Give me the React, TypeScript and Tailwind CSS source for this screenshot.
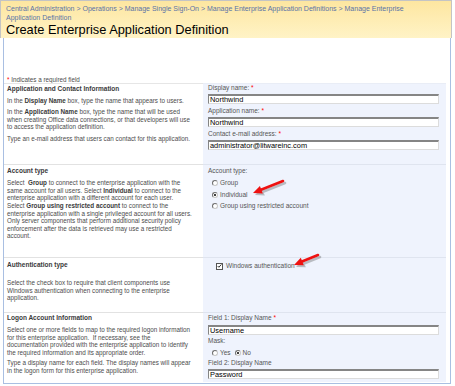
import React from "react";

const font = "font-['Liberation_Sans',Arial,sans-serif]";

function Req() {
  return <span className="text-[#ff0000]"> *</span>;
}

function Input({ value }: { value: string }) {
  return (
    <div
      className="
        h-[10px]
        w-[231px]
        border-t-2
        border-l
        border-r
        border-b
        border-t-[#858585]
        border-l-[#858585]
        border-r-[#dcdcdc]
        border-b-[#dcdcdc]
        bg-white
        pl-[1px]
        text-[7.4px]
        leading-[8px]
        text-black
      "
    >
      {value}
    </div>
  );
}

function Label({ children }: { children: React.ReactNode }) {
  return <div className="h-[8px] whitespace-nowrap text-[6.5px] leading-[8px] text-[#555]">{children}</div>;
}

function Radio({ checked, label }: { checked?: boolean; label: string }) {
  return (
    <div className="flex items-center gap-[2px]">
      <div className="flex h-[6px] w-[6px] items-center justify-center rounded-full border border-t-[#6e6e6e] border-l-[#6e6e6e] border-r-[#c8c8c8] border-b-[#c8c8c8] bg-white">
        {checked && <div className="h-[2px] w-[2px] rounded-full bg-black" />}
      </div>
      <span className="text-[6.5px] leading-[8px] text-[#555]">{label}</span>
    </div>
  );
}

function Heading({ children }: { children: React.ReactNode }) {
  return <div className="text-[6.5px] font-bold leading-[7.6px] text-[#3a3a3a]">{children}</div>;
}

function Para({ children, className = "" }: { children: React.ReactNode; className?: string }) {
  return <div className={`text-[6.3px] leading-[7.6px] text-[#4c4c4c] whitespace-nowrap ${className}`}>{children}</div>;
}

export default function App() {
  return (
    <div className={`relative h-[386px] w-[455px] overflow-hidden bg-white ${font}`}>
      {/* header */}
      <div
        className="
          h-[38px]
          w-[452px]
          border-l
          border-t
          border-r
          border-[#c4c4c4]
          bg-gradient-to-b
          from-[#fde6a0]
          to-[#fff3c6]
          px-[5px]
          pt-[4px]
        "
      >
        <div className="whitespace-nowrap text-[7px] leading-[8.5px] text-[#5a73a6]">
          Central Administration &gt; Operations &gt; Manage Single Sign-On &gt; Manage Enterprise Application Definitions &gt; Manage Enterprise
          <br />
          Application Definition
        </div>
        <div className="mt-[1px] whitespace-nowrap text-[12.8px] leading-[14px] text-black">
          Create Enterprise Application Definition
        </div>
      </div>

      {/* body */}
      <div
        className="
          ml-[3px]
          h-[346px]
          w-[448px]
          border-l
          border-r
          border-b
          border-[#a9bfe2]
          pt-[38px]
        "
      >
        <div className="pl-[3px] text-[6.3px] leading-[7px] text-[#4c4c4c]">
          <span className="text-[#ff0000]">*</span> Indicates a required field
        </div>

        {/* row 1 */}
        <div className="grid grid-cols-[199px_243px]">
          <div className="border-t border-[#e6e6e6] pl-[3px] pt-[1px]">
            <Heading>Application and Contact Information</Heading>
            <Para className="mt-[4.5px]">
              In the <b className="text-[#3a3a3a]">Display Name</b> box, type the name that appears to users.
            </Para>
            <Para className="mt-[3.5px]">
              In the <b className="text-[#3a3a3a]">Application Name</b> box, type the name that will be used
              <br />
              when creating Office data connections, or that developers will use
              <br />
              to access the application definition.
            </Para>
            <Para className="mt-[4px]">Type an e-mail address that users can contact for this application.</Para>
          </div>
          <div className="h-[81px] border-t border-[#e9edf6] bg-[#eff3fd] pl-[5px]">
            <Label>
              Display name:<Req />
            </Label>
            <div className="mt-[2px]">
              <Input value="Northwind" />
            </div>
            <div className="mt-[3px]">
              <Label>
                Application name:<Req />
              </Label>
            </div>
            <div className="mt-[2px]">
              <Input value="Northwind" />
            </div>
            <div className="mt-[3px]">
              <Label>
                Contact e-mail address:<Req />
              </Label>
            </div>
            <div className="mt-[2px]">
              <Input value="administrator@litwareinc.com" />
            </div>
          </div>
        </div>

        {/* row 2 */}
        <div className="grid grid-cols-[199px_243px]">
          <div className="border-t border-[#e2e2e2] pl-[3px] pt-[2px]">
            <Heading>Account type</Heading>
            <Para className="mt-[4.6px]">
              Select&nbsp; <b className="text-[#3a3a3a]">Group</b> to connect to the enterprise application with the
              <br />
              same account for all users. Select <b className="text-[#3a3a3a]">Individual</b> to connect to the
              <br />
              enterprise application with a different account for each user.
              <br />
              Select <b className="text-[#3a3a3a]">Group using restricted account</b> to connect to the
              <br />
              enterprise application with a single privileged account for all users.
              <br />
              Only server components that perform additional security policy
              <br />
              enforcement after the data is retrieved may use a restricted
              <br />
              account.
            </Para>
          </div>
          <div className="h-[93px] border-t border-[#dfe4ef] bg-[#eff3fd] pl-[5px] pt-[2px]">
            <Label>Account type:</Label>
            <div className="mt-[4px] flex flex-col gap-[3.5px] pl-[4px]">
              <Radio label="Group" />
              <Radio checked label="Individual" />
              <Radio label="Group using restricted account" />
            </div>
          </div>
        </div>

        {/* row 3 */}
        <div className="grid grid-cols-[199px_243px]">
          <div className="border-t border-[#e2e2e2] pl-[3px] pt-[3px]">
            <Heading>Authentication type</Heading>
            <Para className="mt-[10.6px]">
              Select the check box to require that client components use
              <br />
              Windows authentication when connecting to the enterprise
              <br />
              application.
            </Para>
          </div>
          <div className="h-[55px] border-t border-[#dfe4ef] bg-[#eff3fd] pl-[13px] pt-[4px]">
            <div className="flex items-center gap-[3px]">
              <div className="flex h-[7px] w-[7px] items-center justify-center border border-[#555] bg-white">
                <svg viewBox="0 0 8 8" className="h-[6px] w-[6px]">
                  <path d="M1 4 L3 6 L7 1.5" fill="none" stroke="#111" strokeWidth="1.4" />
                </svg>
              </div>
              <span className="text-[6.5px] leading-[8px] text-[#555]">Windows authentication</span>
            </div>
          </div>
        </div>

        {/* row 4 */}
        <div className="grid grid-cols-[199px_243px]">
          <div className="border-t border-[#e2e2e2] pl-[3px] pt-[1px]">
            <Heading>Logon Account Information</Heading>
            <Para className="mt-[4.6px]">
              Select one or more fields to map to the required logon information
              <br />
              for this enterprise application.&nbsp; If necessary, see the
              <br />
              documentation provided with the enterprise application to identify
              <br />
              the required information and its appropriate order.
            </Para>
            <Para className="mt-[2.6px]">
              Type a display name for each field. The display names will appear
              <br />
              in the logon form for this enterprise application.
            </Para>
          </div>
          <div className="h-[70px] border-t border-[#dfe4ef] bg-[#eff3fd] pl-[5px] pt-[1px]">
            <Label>
              Field 1: Display Name<Req />
            </Label>
            <div className="mt-[3px]">
              <Input value="Username" />
            </div>
            <div className="mt-[2px]">
              <Label>Mask:</Label>
            </div>
            <div className="mt-[4px] flex gap-[4px] pl-[4px]">
              <Radio label="Yes" />
              <Radio checked label="No" />
            </div>
            <div className="mt-[2px]">
              <Label>Field 2: Display Name</Label>
            </div>
            <div className="mt-[2px]">
              <Input value="Password" />
            </div>
          </div>
        </div>
      </div>

      {/* annotation arrows */}
      <svg className="pointer-events-none absolute left-0 top-0" width="455" height="386">
        <g opacity="0.35" transform="translate(2 2)">
          <line x1="283" y1="181" x2="261" y2="189.7" stroke="#555" strokeWidth="2.6" strokeLinecap="round" />
          <polygon points="253,193 262.8,193.4 259.9,185.9" fill="#555" />
          <line x1="318" y1="255" x2="302" y2="261.5" stroke="#555" strokeWidth="2.6" strokeLinecap="round" />
          <polygon points="294,265 303.8,265.2 300.8,257.8" fill="#555" />
        </g>
        <line x1="283" y1="181" x2="261" y2="189.7" stroke="#ee1111" strokeWidth="2.6" strokeLinecap="round" />
        <polygon points="253,193 262.8,193.4 259.9,185.9" fill="#ee1111" />
        <line x1="318" y1="255" x2="302" y2="261.5" stroke="#ee1111" strokeWidth="2.6" strokeLinecap="round" />
        <polygon points="294,265 303.8,265.2 300.8,257.8" fill="#ee1111" />
      </svg>
    </div>
  );
}
